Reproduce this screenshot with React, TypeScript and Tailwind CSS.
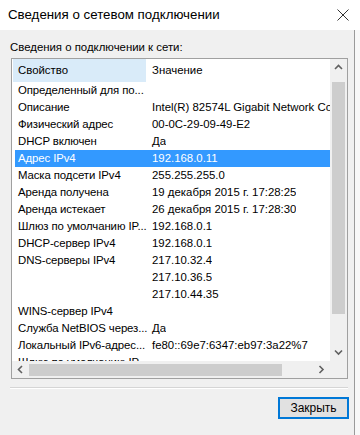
import React from "react";

const rows: [string, string][] = [
  ["Определенный для по...", ""],
  ["Описание", "Intel(R) 82574L Gigabit Network Connection"],
  ["Физический адрес", "00-0C-29-09-49-E2"],
  ["DHCP включен", "Да"],
  ["Адрес IPv4", "192.168.0.11"],
  ["Маска подсети IPv4", "255.255.255.0"],
  ["Аренда получена", "19 декабря 2015 г. 17:28:25"],
  ["Аренда истекает", "26 декабря 2015 г. 17:28:30"],
  ["Шлюз по умолчанию IP...", "192.168.0.1"],
  ["DHCP-сервер IPv4", "192.168.0.1"],
  ["DNS-серверы IPv4", "217.10.32.4"],
  ["", "217.10.36.5"],
  ["", "217.10.44.35"],
  ["WINS-сервер IPv4", ""],
  ["Служба NetBIOS через...", "Да"],
  ["Локальный IPv6-адрес...", "fe80::69e7:6347:eb97:3a22%7"],
  ["Шлюз по умолчанию IP...", ""],
];

const Chevron = ({ dir }: { dir: "up" | "down" | "left" | "right" }) => {
  const d =
    dir === "up"
      ? "M1 5 L4.5 1.5 L8 5"
      : dir === "down"
      ? "M1 1.5 L4.5 5 L8 1.5"
      : dir === "left"
      ? "M5 1 L1.5 4.5 L5 8"
      : "M1.5 1 L5 4.5 L1.5 8";
  const w = dir === "up" || dir === "down" ? 9 : 7;
  const h = dir === "up" || dir === "down" ? 7 : 9;
  return (
    <svg width={w} height={h} viewBox={`0 0 ${w} ${h}`}>
      <path d={d} fill="none" stroke="#606060" strokeWidth="1.6" />
    </svg>
  );
};

export default function App() {
  return (
    <div
      className="w-[360px] h-[435px] flex flex-col bg-white text-black overflow-hidden"
      style={{ fontFamily: '"Liberation Sans", Arial, sans-serif' }}
    >
      {/* Title bar */}
      <div className="h-[30px] flex items-center justify-between bg-white pl-[8px] pr-[10px] shrink-0">
        <span className="text-[13.3px] leading-none">Сведения о сетевом подключении</span>
        <svg width="12" height="12" viewBox="0 0 12 12" className="mr-[1px]">
          <path d="M0.5 0.5 L11.5 11.5 M11.5 0.5 L0.5 11.5" stroke="#333" strokeWidth="1" />
        </svg>
      </div>

      <div className="flex-1 flex">
        {/* Body */}
        <div className="w-[354px] bg-[#f0f0f0] flex flex-col pl-[11px] pr-[6px]">
          <div className="text-[11.4px] leading-[16px] mt-[9px] -ml-[1px] h-[19px]">
            Сведения о подключении к сети:
          </div>

          {/* List box */}
          <div className="w-[337px] h-[321px] border border-[#a0a0a0] bg-white flex flex-col">
            <div className="flex h-[302px]">
              {/* content */}
              <div className="w-[319px] overflow-hidden flex flex-col">
                <div className="h-[23px] flex items-center text-[11.4px] shrink-0">
                  <div className="w-[133px] shrink-0 h-full ml-[1px] bg-[#d9ebf9] flex items-center pl-[5px]">
                    Свойство
                  </div>
                  <div className="pl-[6px] whitespace-nowrap">Значение</div>
                </div>
                {rows.map(([k, v], i) => {
                  const sel = i === 4;
                  return (
                    <div
                      key={i}
                      className={
                        "h-[17px] shrink-0 flex items-center text-[11.4px] whitespace-nowrap ml-[3px] " +
                        (sel ? "bg-[#3399ff] text-white" : "")
                      }
                    >
                      <div className="w-[131px] shrink-0 pl-[3px] tracking-[-0.1px]">{k}</div>
                      <div className="pl-[6px] overflow-hidden">{v}</div>
                    </div>
                  );
                })}
              </div>
              {/* vertical scrollbar */}
              <div className="w-[17px] bg-[#f0f0f0] flex flex-col items-center">
                <div className="h-[17px] w-full flex items-center justify-center">
                  <Chevron dir="up" />
                </div>
                <div className="h-[232px] w-[13px] bg-[#cdcdcd] mt-[6px]" />
                <div className="flex-1" />
                <div className="h-[17px] w-full flex items-center justify-center">
                  <Chevron dir="down" />
                </div>
              </div>
            </div>
            {/* horizontal scrollbar */}
            <div className="h-[17px] flex">
              <div className="w-[319px] bg-[#f0f0f0] flex items-center">
                <div className="w-[17px] h-full flex items-center justify-center">
                  <Chevron dir="left" />
                </div>
                <div className="w-[253px] h-[12px] bg-[#cdcdcd]" />
                <div className="flex-1" />
                <div className="w-[17px] h-full flex items-center justify-center">
                  <Chevron dir="right" />
                </div>
              </div>
              <div className="w-[17px] bg-[#f0f0f0]" />
            </div>
          </div>

          {/* separator */}
          <div className="mt-[8px] -ml-[1px] w-[338px] border-t border-[#d5d5d5] border-b border-b-white" />

          {/* button */}
          <div className="flex justify-end mt-[8px] pr-[0px]">
            <button className="w-[71px] h-[22px] border-2 border-[#0078d7] bg-[#e1e1e1] text-[12px] flex items-center justify-center mr-[-1px]">
              Закрыть
            </button>
          </div>
        </div>
        <div className="w-[1px] bg-[#9a9a9a]" />
        <div className="flex-1 bg-[#f8f8f8]" />
      </div>
    </div>
  );
}
